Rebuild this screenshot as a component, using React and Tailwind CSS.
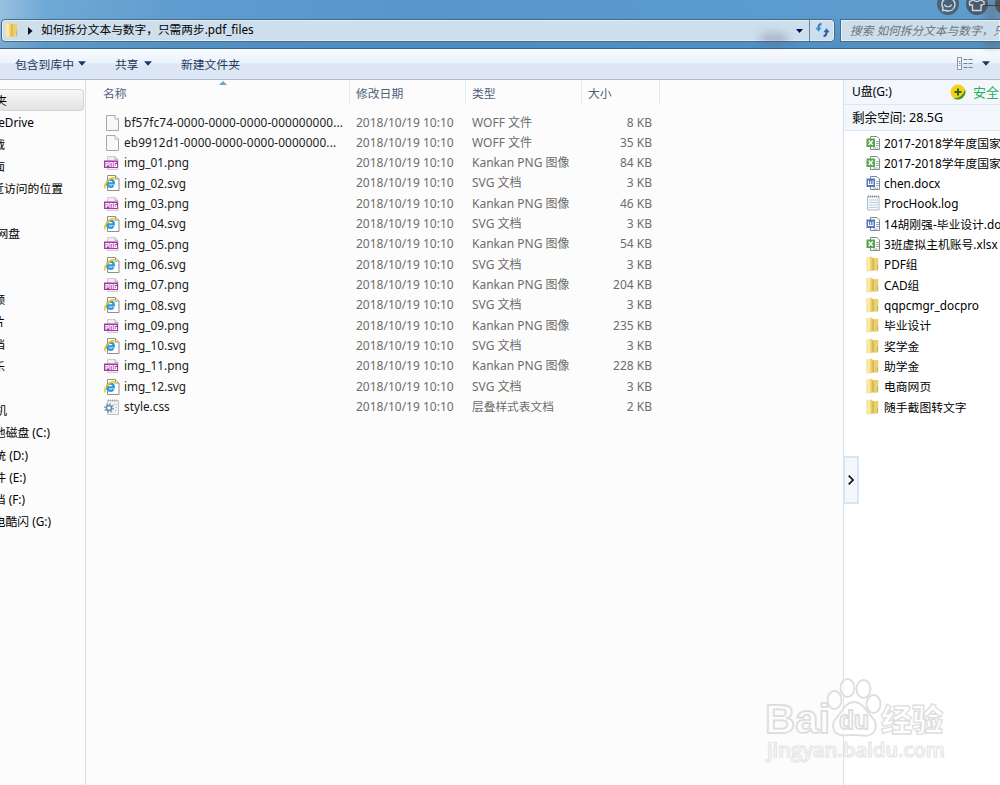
import React from "react";

const files = [
  { name: "bf57fc74-0000-0000-0000-000000000...", kind: "blank", type: "WOFF 文件", size: "8 KB" },
  { name: "eb9912d1-0000-0000-0000-0000000...", kind: "blank", type: "WOFF 文件", size: "35 KB" },
  { name: "img_01.png", kind: "png", type: "Kankan PNG 图像", size: "84 KB" },
  { name: "img_02.svg", kind: "svg", type: "SVG 文档", size: "3 KB" },
  { name: "img_03.png", kind: "png", type: "Kankan PNG 图像", size: "46 KB" },
  { name: "img_04.svg", kind: "svg", type: "SVG 文档", size: "3 KB" },
  { name: "img_05.png", kind: "png", type: "Kankan PNG 图像", size: "54 KB" },
  { name: "img_06.svg", kind: "svg", type: "SVG 文档", size: "3 KB" },
  { name: "img_07.png", kind: "png", type: "Kankan PNG 图像", size: "204 KB" },
  { name: "img_08.svg", kind: "svg", type: "SVG 文档", size: "3 KB" },
  { name: "img_09.png", kind: "png", type: "Kankan PNG 图像", size: "235 KB" },
  { name: "img_10.svg", kind: "svg", type: "SVG 文档", size: "3 KB" },
  { name: "img_11.png", kind: "png", type: "Kankan PNG 图像", size: "228 KB" },
  { name: "img_12.svg", kind: "svg", type: "SVG 文档", size: "3 KB" },
  { name: "style.css", kind: "css", type: "层叠样式表文档", size: "2 KB" },
];

// right = where the label ends, the pane is scrolled past its left part
const places = [
  { label: "夹", right: 7, active: true },
  { label: "eDrive", right: 34 },
  { label: "载", right: 5 },
  { label: "面", right: 5 },
  { label: "近访问的位置", right: 63 },
  null,
  { label: "网盘", right: 20 },
  null,
  null,
  { label: "频", right: 5 },
  { label: "片", right: 5 },
  { label: "档", right: 5 },
  { label: "乐", right: 5 },
  null,
  { label: "机", right: 7 },
  { label: "地磁盘 (C:)", right: 50 },
  { label: "统 (D:)", right: 28 },
  { label: "件 (E:)", right: 26 },
  { label: "档 (F:)", right: 25 },
  { label: "电酷闪 (G:)", right: 51 },
];

const diskFiles = [
  { name: "2017-2018学年度国家", kind: "xls" },
  { name: "2017-2018学年度国家", kind: "xls" },
  { name: "chen.docx", kind: "doc" },
  { name: "ProcHook.log", kind: "log" },
  { name: "14胡刚强-毕业设计.docx", kind: "doc" },
  { name: "3班虚拟主机账号.xlsx", kind: "xls" },
  { name: "PDF组", kind: "folder" },
  { name: "CAD组", kind: "folder" },
  { name: "qqpcmgr_docpro", kind: "folder" },
  { name: "毕业设计", kind: "folder" },
  { name: "奖学金", kind: "folder" },
  { name: "助学金", kind: "folder" },
  { name: "电商网页", kind: "folder" },
  { name: "随手截图转文字", kind: "folder" },
];

function FileIcon({ kind }) {
  return (
    <svg width="16" height="16" viewBox="0 0 16 16" className="shrink-0">
      {kind === "blank" && (
        <g>
          <path d="M2.500 .5h8.500l3.500 3.500v11.500h-12z" fill="#f8f8f8" stroke="#a9a9a9" />
          <path d="M11 .5v3.500h3.500" fill="#fff" stroke="#b5b5b5" />
        </g>
      )}
      {kind === "png" && (
        <g>
          <path d="M3.500 1.500h7.500l3 3v10h-10.500z" fill="#f0eef0" stroke="#cfcdcf" />
          <path d="M11 1.500v3h3" fill="#d8d6d8" stroke="#bbb" />
          <rect x="0" y="5.500" width="14" height="7.500" fill="#a537a6" />
          <path
            d="M2 12v-4.500h2.200v2.500h-2M6 12v-4.500h2.200v4.500M12.500 7.500h-2.300v4h2.200v-1.800h-1"
            fill="none"
            stroke="#fff"
            strokeWidth="1.200"
          />
        </g>
      )}
      {kind === "svg" && (
        <g>
          <path d="M3.500 .5h8l3.500 3.500v11.500h-11.500z" fill="#fff" stroke="#8f8f8f" />
          <path d="M11.500 .5v3.500h3.500" fill="#eee" stroke="#8f8f8f" />
          <path
            d="M3 8.300h6.800c0-4.800-6.800-4.800-6.800 0 0 4.200 5.200 4.200 6.400 1.900"
            fill="none"
            stroke="#2f97dc"
            strokeWidth="2.300"
          />
          <path d="M1.500 13.300c-2.800-2.500 4-11.200 8.700-10.600 1 .2 1.200 1 .8 2" fill="none" stroke="#edc91f" strokeWidth="1.600" />
        </g>
      )}
      {kind === "css" && (
        <g>
          <path d="M3.500 1.500h11v14h-11z" fill="#f3f3f3" stroke="#c2c2c2" />
          <path d="M4 1.500h10" stroke="#aaa" strokeDasharray="1 1" strokeWidth="2" />
          <path d="M9 5.500h4M11 8.500h2M11 11.500h2" stroke="#c5cbd0" />
          <circle cx="5" cy="9" r="4" fill="none" stroke="#86a5bc" strokeWidth="2" strokeDasharray="1.600 1.500" />
          <circle cx="5" cy="9" r="2.500" fill="#fff" stroke="#6089a8" strokeWidth="1.500" />
        </g>
      )}
      {(kind === "xls" || kind === "doc") && (
        <g>
          <path d="M4.500 1.500h6.500l2.500 2.500v10.500h-9z" fill="#fff" stroke="#85888f" />
          <path d="M10 6.500h3M10 8.500h3M10 10.500h3M7 13h5" stroke={kind === "xls" ? "#9bb89b" : "#9cabd0"} />
          <rect x=".5" y="3.500" width="8.500" height="8.500" fill={kind === "xls" ? "#55a650" : "#5377bf"} />
          {kind === "xls" ? (
            <path d="M2.700 5.500l4 4.500M6.700 5.500l-4 4.500" stroke="#fff" strokeWidth="1.400" />
          ) : (
            <path d="M2.500 5.500v4.500M7 5.500v4.500M4.700 6v3.500M2.500 9.500h4.500" fill="none" stroke="#fff" />
          )}
        </g>
      )}
      {kind === "log" && (
        <g>
          <path d="M1.500 1.500h11.500v13.500h-11.500z" fill="#f5f9fc" stroke="#b4bbc0" />
          <path d="M2 1.500h11" stroke="#8b9297" strokeDasharray="1 1" strokeWidth="2" />
          <path d="M3 5h9M3 7.500h9M3 10h9M3 12.500h9" stroke="#bfd2df" />
        </g>
      )}
      {kind === "folder" && (
        <g>
          <path d="M.5 1.500l5-1 1 1.500h5.500v12.500h-5.500l-5 1-1-.5z" fill="#f0d774" />
          <path d="M.5 1.500l4-.8v14.500l-4-.7z" fill="#f8eaa8" />
          <path d="M4.500 .7l2 .8v13l-2 .8z" fill="#e9cd69" />
          <path d="M6.500 2l1.300 .8v11.200l-1.300 .5z" fill="#c9a94a" />
          <path d="M7.800 2.500l4.500-.5v12.200l-4.500 .3z" fill="#eed06a" />
          <path d="M11.500 9v4.500" stroke="#8fbdb2" />
        </g>
      )}
    </svg>
  );
}

function Caret() {
  return (
    <svg width="8" height="5" viewBox="0 0 8 5">
      <path d="M0 .3h8l-4 4.500z" fill="#173a5e" />
    </svg>
  );
}

function TitleBar() {
  return (
    <header className="relative h-[49px] shrink-0 border-b border-[#3f617f] bg-[linear-gradient(90deg,#98c2e0_0px,#6fa9d5_45px,#5f9ccf_180px,#5896cb_420px,#5c9bce_760px,#5f9ccd_1000px)]">
      <div className="absolute inset-0 bg-[linear-gradient(180deg,transparent_30%,#3577ad55_100%)]" />
      <div className="absolute right-0 top-0 h-12 w-4 bg-[#68686f]/40 blur-[3px]" />
      <div className="relative flex items-start pl-px pt-[19px]">
        <div className="flex h-[23px] w-[834px] shrink-0 items-center rounded-sm border border-[#47698a] bg-[#cddeed] shadow-[inset_0_0_0_1px_#e5eff7]">
          <div className="ml-[3px] flex w-[23px] pb-px">
            <FileIcon kind="folder" />
          </div>
          <svg width="5" height="8" viewBox="0 0 5 8">
            <path d="M0 0l4.500 4-4.500 4z" fill="#111" />
          </svg>
          <span className="ml-[8px] pb-[3px] text-[11.7px] text-black">如何拆分文本与数字，只需两步.pdf_files</span>
          <div className="relative ml-auto mr-1.5 flex">
            <span className="absolute -left-9 top-1 h-3 w-7 rounded-full bg-[#585d75]/30 blur-[4px]" />
            <svg width="7" height="4" viewBox="0 0 7 4">
              <path d="M0 0h7l-3.500 4z" fill="#04045c" />
            </svg>
          </div>
          <div className="flex h-full w-[25px] items-center justify-center border-l border-[#67849f]">
            <svg width="15" height="14" viewBox="0 0 15 14" className="mb-px">
              <path d="M6.500 1c-2.500 0-3 1.500-3 4" fill="none" stroke="#2e7fc0" strokeWidth="2" />
              <path d="M.3 4.800h6.400l-3.200 4z" fill="#3995d3" />
              <path d="M8.500 13c2.500 0 3-1.500 3-4" fill="none" stroke="#235a9b" strokeWidth="2" />
              <path d="M8.300 9.200h6.400l-3.200-4z" fill="#2868ae" />
            </svg>
          </div>
        </div>
        <div className="ml-[5px] flex h-[23px] flex-1 items-center overflow-hidden border border-r-0 border-[#47698a] bg-[#cddeeb] pl-[9px] shadow-[inset_0_0_0_1px_#e5eff7]">
          <span className="whitespace-nowrap pb-px text-[11.7px] italic text-[#68747f]">搜索 如何拆分文本与数字，只</span>
        </div>
      </div>
      {/* round skin buttons, cut off by the window top */}
      <svg width="66" height="16" viewBox="0 0 66 16" className="absolute right-0 top-0">
        <circle cx="14" cy="4" r="11" fill="#4a6275" />
        <circle cx="43" cy="4" r="11" fill="#4a5a68" />
        <circle cx="72" cy="4" r="11" fill="#4f5358" />
        <path d="M8.500 10.500l.5-2.500a6.500 6.500 0 1 1 3 2.500z" fill="none" stroke="#d3dbe1" strokeWidth="1.400" />
        <path d="M10.500 4.500c1 3 6 3 7 0" fill="none" stroke="#d3dbe1" strokeWidth="1.200" />
        <path d="M40 0l-4.500 1.500v3.500h3v5.500h8.500v-5.500h3v-3.500l-4.500-1.500c-1 2-4.500 2-5.500 0z" fill="none" stroke="#d3dbe1" strokeWidth="1.300" />
        <path d="M49 5.500h17" stroke="#3d4247" />
      </svg>
    </header>
  );
}

function Toolbar() {
  return (
    <div className="flex h-[31px] shrink-0 items-center border-b border-[#adb9cb] bg-[linear-gradient(180deg,#fafdff_0%,#eaf2fb_45%,#dde7f4_50%,#dce6f4_100%)] pb-px text-[11.8px] text-[#1e395b]">
      <div className="ml-[15px] flex w-[100px] items-center gap-1">
        包含到库中 <Caret />
      </div>
      <div className="flex w-[66px] items-center gap-[5px]">
        共享 <Caret />
      </div>
      <div>新建文件夹</div>
      <div className="ml-auto mr-2.5 flex items-center gap-[9px]">
        <svg width="16" height="13" viewBox="0 0 16 13">
          <rect x=".5" y=".5" width="4" height="12" fill="#f7f8fb" stroke="#8d98ab" />
          <path d="M1.500 4.500h2M1.500 8.500h2" stroke="#8d98ab" />
          <path d="M2 6.500h1.500" stroke="#c66" />
          <path d="M6.500 2.500h9M6.500 6.500h9M6.500 10.500h9" stroke="#6d7f98" strokeDasharray="4 1" />
        </svg>
        <Caret />
      </div>
    </div>
  );
}

function Sidebar() {
  return (
    <aside className="w-[86px] shrink-0 overflow-hidden border-r border-[#d3dfee] pt-[9px] text-[11.8px] text-black">
      {places.map((place, i) => (
        <div
          key={i}
          className={
            place?.active
              ? "mr-[1px] h-[22.2px] rounded-r-sm border border-l-0 border-[#d5d5d5] bg-linear-to-b from-[#f8f8f8] to-[#e3e3e3]"
              : "h-[22.2px]"
          }
        >
          {place && (
            <div
              className="flex h-full items-center justify-end whitespace-nowrap pb-px"
              style={{ width: place.right }}
            >
              {place.label}
            </div>
          )}
        </div>
      ))}
    </aside>
  );
}

function ColumnHead({ children, className }) {
  return (
    <div className={`relative flex items-center border-r border-[#e3ebf5] pl-1.5 ${className}`}>
      {children}
    </div>
  );
}

function FileList() {
  return (
    <main className="w-[757px] shrink-0">
      <div className="flex h-[25px] text-[11.8px] text-[#4c607a]">
        <ColumnHead className="w-[264px] pl-[17px]">
          名称
          <svg width="8" height="5" viewBox="0 0 8 5" className="absolute left-[133px] top-px">
            <path d="M0 4l4-4 4 4z" fill="#6fa5c2" />
          </svg>
        </ColumnHead>
        <ColumnHead className="w-[116px]">修改日期</ColumnHead>
        <ColumnHead className="w-[116px]">类型</ColumnHead>
        <ColumnHead className="w-[78px]">大小</ColumnHead>
      </div>
      <div className="pt-[7.4px]">
        {files.map((file) => (
          <div key={file.name} className="flex h-[20.32px] items-center whitespace-nowrap text-xs text-[#6d6d6d]">
            <div className="flex w-[270px] items-center gap-1 pl-[18px] text-[#1b1b1b]">
              <FileIcon kind={file.kind} />
              <span className={file.kind === "blank" ? "text-[11.8px] tracking-[0.13px]" : "text-[11.8px]"}>
                {file.name}
              </span>
            </div>
            <div className="w-[116px]">2018/10/19 10:10</div>
            <div className={file.kind === "css" ? "w-[116px] text-[11.7px]" : "w-[116px]"}>{file.type}</div>
            <div className="w-[64px] text-right">{file.size}</div>
          </div>
        ))}
      </div>
    </main>
  );
}

function DiskPanel() {
  return (
    <section className="relative flex-1 overflow-hidden border-l border-[#d3e2f2] bg-white text-black">
      <div className="flex h-[25px] items-center whitespace-nowrap border-b border-[#d9e8f3] bg-[#f3f7fc] pl-2 text-[12px]">
        <span className="w-[98px] shrink-0">U盘(G:)</span>
        <svg width="16" height="16" viewBox="0 0 16 16" className="shrink-0">
          <circle cx="8" cy="8" r="7.500" fill="#f8ce18" />
          <path d="M15 5.500a7.500 7.500 0 0 1-11.500 8.500c5 .5 9.500-2 11.500-8.500z" fill="#409b2a" />
          <path d="M8 4.500v7M4.500 8h7" stroke="#2b6b1f" strokeWidth="2" />
        </svg>
        <span className="ml-[7px] text-[13px] text-[#27b45b]">安全</span>
      </div>
      <div className="flex h-[26px] items-center border-b border-[#d9e8f3] bg-[#f3f7fc] pl-2 text-[12.6px]">
        剩余空间: 28.5G
      </div>
      <div className="pl-[22px] pt-[1.4px]">
        {diskFiles.map((file, i) => (
          <div key={i} className="flex h-[20.32px] items-center gap-[2px] whitespace-nowrap text-[11.8px]">
            <FileIcon kind={file.kind} />
            {file.name}
          </div>
        ))}
      </div>
      <button className="absolute left-0 top-[376px] flex h-12 w-[15px] items-center justify-center border-2 border-l border-[#d8e5f4] bg-[#f4f8fd]">
        <svg width="6" height="10" viewBox="0 0 6 10" className="shrink-0">
          <path d="M.7 .7l4.300 4.300-4.300 4.300" fill="none" stroke="#111" strokeWidth="1.700" />
        </svg>
      </button>
    </section>
  );
}

function Watermark() {
  return (
    <svg
      width="190"
      height="95"
      viewBox="0 0 190 95"
      className="absolute left-[762px] top-[674px]"
      fill="#fff"
      fillOpacity="0.6"
      stroke="#dedede"
      strokeWidth="1.800"
    >
      <text x="3" y="59" fontSize="41" fontWeight="700" textLength="65" lengthAdjust="spacingAndGlyphs" fontFamily="Liberation Sans, sans-serif">
        Bai
      </text>
      <ellipse cx="72.500" cy="26" rx="7" ry="9" />
      <ellipse cx="85.500" cy="14" rx="7" ry="9" />
      <ellipse cx="101.500" cy="15" rx="7" ry="9" />
      <ellipse cx="111.500" cy="30" rx="7" ry="9" />
      <path d="M92 28c8 0 12 8 17 14 5 5 7 10 3 16-5 6-12 3-20 3s-14 2-19-3c-4-6-2-11 3-16 5-6 8-14 16-14z" />
      <text x="77" y="55" fontSize="25" fontWeight="700" textLength="30" lengthAdjust="spacingAndGlyphs" fontFamily="Liberation Sans, sans-serif">
        du
      </text>
      <text x="119" y="57" fontSize="31" fontWeight="900" textLength="62" lengthAdjust="spacingAndGlyphs" fontFamily="Noto Sans CJK SC, sans-serif" strokeWidth="1.300">
        经验
      </text>
      <text x="5" y="83" fontSize="19" fontWeight="600" textLength="178" lengthAdjust="spacingAndGlyphs" fontFamily="Open Sans, sans-serif" stroke="#e6e6e6" strokeWidth="1.200">
        jingyan.baidu.com
      </text>
    </svg>
  );
}

export default function App() {
  return (
    <div className="relative flex h-[785px] w-[1000px] flex-col overflow-hidden bg-[#fcfcfc] font-['Noto_Sans','Noto_Sans_CJK_SC',sans-serif] leading-4">
      <TitleBar />
      <Toolbar />
      <div className="flex min-h-0 flex-1">
        <Sidebar />
        <FileList />
        <DiskPanel />
      </div>
      <Watermark />
    </div>
  );
}
